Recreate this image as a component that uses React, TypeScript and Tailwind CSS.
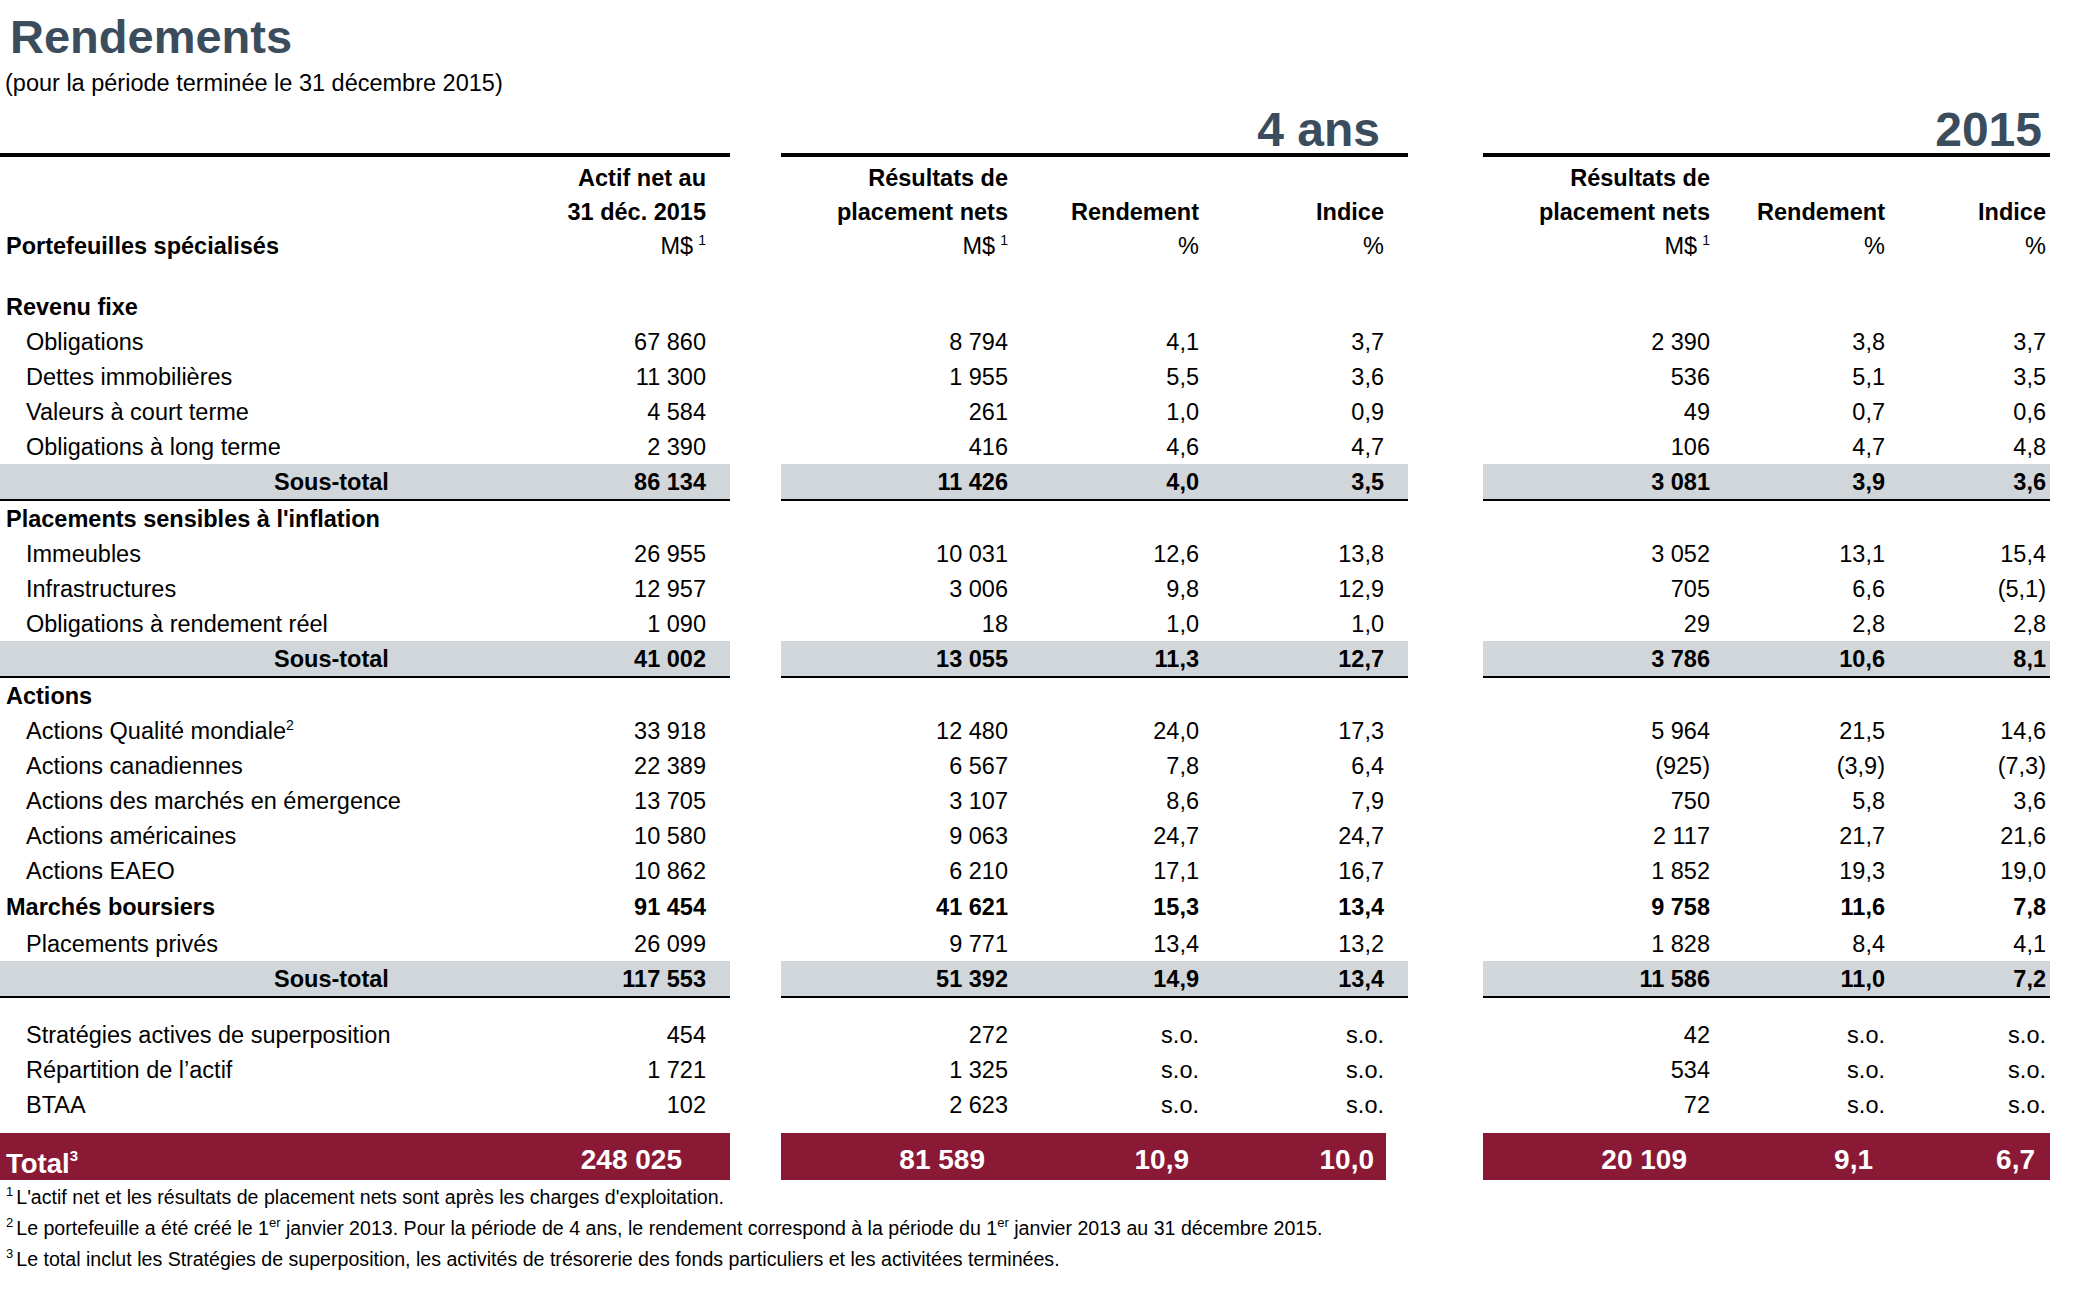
import React from 'react';

type Kind = 'head' | 'item' | 'bold' | 'sub';

interface Row {
  label: string;
  sup?: string;
  kind: Kind;
  v?: string[];
  h?: 35 | 36 | 37;
}

const HEIGHTS: Record<number, string> = {
  35: 'h-[35px]',
  36: 'h-[36px]',
  37: 'h-[37px]',
};

// Bloc principal du tableau
const rowsTop: Row[] = [
  { label: 'Revenu fixe', kind: 'head' },
  { label: 'Obligations', kind: 'item', v: ['67 860', '8 794', '4,1', '3,7', '2 390', '3,8', '3,7'] },
  { label: 'Dettes immobilières', kind: 'item', v: ['11 300', '1 955', '5,5', '3,6', '536', '5,1', '3,5'] },
  { label: 'Valeurs à court terme', kind: 'item', v: ['4 584', '261', '1,0', '0,9', '49', '0,7', '0,6'] },
  { label: 'Obligations à long terme', kind: 'item', v: ['2 390', '416', '4,6', '4,7', '106', '4,7', '4,8'] },
  { label: 'Sous-total', kind: 'sub', v: ['86 134', '11 426', '4,0', '3,5', '3 081', '3,9', '3,6'] },
  { label: "Placements sensibles à l'inflation", kind: 'head' },
  { label: 'Immeubles', kind: 'item', v: ['26 955', '10 031', '12,6', '13,8', '3 052', '13,1', '15,4'] },
  { label: 'Infrastructures', kind: 'item', v: ['12 957', '3 006', '9,8', '12,9', '705', '6,6', '(5,1)'] },
  { label: 'Obligations à rendement réel', kind: 'item', v: ['1 090', '18', '1,0', '1,0', '29', '2,8', '2,8'] },
  { label: 'Sous-total', kind: 'sub', v: ['41 002', '13 055', '11,3', '12,7', '3 786', '10,6', '8,1'] },
  { label: 'Actions', kind: 'head' },
  { label: 'Actions Qualité mondiale', sup: '2', kind: 'item', v: ['33 918', '12 480', '24,0', '17,3', '5 964', '21,5', '14,6'] },
  { label: 'Actions canadiennes', kind: 'item', v: ['22 389', '6 567', '7,8', '6,4', '(925)', '(3,9)', '(7,3)'] },
  { label: 'Actions des marchés en émergence', kind: 'item', v: ['13 705', '3 107', '8,6', '7,9', '750', '5,8', '3,6'] },
  { label: 'Actions américaines', kind: 'item', v: ['10 580', '9 063', '24,7', '24,7', '2 117', '21,7', '21,6'] },
  { label: 'Actions EAEO', kind: 'item', v: ['10 862', '6 210', '17,1', '16,7', '1 852', '19,3', '19,0'] },
  { label: 'Marchés boursiers', kind: 'bold', h: 37, v: ['91 454', '41 621', '15,3', '13,4', '9 758', '11,6', '7,8'] },
  { label: 'Placements privés', kind: 'item', h: 36, v: ['26 099', '9 771', '13,4', '13,2', '1 828', '8,4', '4,1'] },
  { label: 'Sous-total', kind: 'sub', v: ['117 553', '51 392', '14,9', '13,4', '11 586', '11,0', '7,2'] },
];

const rowsOther: Row[] = [
  { label: 'Stratégies actives de superposition', kind: 'item', v: ['454', '272', 's.o.', 's.o.', '42', 's.o.', 's.o.'] },
  { label: 'Répartition de l’actif', kind: 'item', v: ['1 721', '1 325', 's.o.', 's.o.', '534', 's.o.', 's.o.'] },
  { label: 'BTAA', kind: 'item', v: ['102', '2 623', 's.o.', 's.o.', '72', 's.o.', 's.o.'] },
];

const DataRow: React.FC<{ row: Row }> = ({ row }) => {
  const sub = row.kind === 'sub';
  const band = sub ? 'bg-[#d1d6db] border-b-2 border-black' : '';
  const weight = row.kind === 'item' ? 'font-normal' : 'font-bold';
  const pad = row.kind === 'item' ? 'pl-[26px]' : sub ? 'pl-[274px]' : 'pl-[6px]';
  const v = row.v ?? [];
  return (
    <div className={`flex ${HEIGHTS[row.h ?? (sub ? 37 : 35)]} ${weight}`}>
      <div className={`w-[730px] flex items-center pt-[4px] ${band}`}>
        <div className={`flex-1 whitespace-nowrap ${pad}`}>
          {row.label}
          {row.sup && <span className="relative -top-[9px] text-[14px]">{row.sup}</span>}
        </div>
        <div className="w-[160px] pr-[24px] text-right whitespace-nowrap">{v[0]}</div>
      </div>
      <div className="w-[51px]" />
      <div className={`w-[627px] flex items-center pt-[4px] pr-[24px] ${band}`}>
        <div className="w-[227px] text-right whitespace-nowrap">{v[1]}</div>
        <div className="w-[191px] text-right whitespace-nowrap">{v[2]}</div>
        <div className="w-[185px] text-right whitespace-nowrap">{v[3]}</div>
      </div>
      <div className="w-[75px]" />
      <div className={`w-[567px] flex items-center pt-[4px] pr-[4px] ${band}`}>
        <div className="w-[227px] text-right whitespace-nowrap">{v[4]}</div>
        <div className="w-[175px] text-right whitespace-nowrap">{v[5]}</div>
        <div className="w-[161px] text-right whitespace-nowrap">{v[6]}</div>
      </div>
    </div>
  );
};

const MSup = () => (
  <span className="font-normal">
    M$<span className="relative -top-[9px] text-[14px] ml-[5px]">1</span>
  </span>
);

const HeadCol: React.FC<{ w: string; lines: React.ReactNode[] }> = ({ w, lines }) => (
  <div className={`${w} flex flex-col items-end`}>
    {lines.map((l, i) => (
      <div key={i} className="h-[34px] leading-[34px] whitespace-nowrap">
        {l}
      </div>
    ))}
  </div>
);

const App: React.FC = () => {
  return (
    <div className="font-['Liberation_Sans',Arial,sans-serif] w-[2086px] h-[1297px] bg-white text-black text-[23.5px] overflow-hidden">
      {/* Titre */}
      <h1 className="mt-[13px] pl-[10px] text-[47px] leading-none font-bold text-[#3b4c5c]">Rendements</h1>
      <p className="mt-[12px] pl-[5px] text-[23.5px] leading-none">(pour la période terminée le 31 décembre 2015)</p>

      {/* Périodes */}
      <div className="flex mt-[11px] h-[50px]">
        <div className="w-[730px] border-b-4 border-black" />
        <div className="w-[51px]" />
        <div className="w-[627px] border-b-4 border-black flex justify-end pr-[28px] text-[48px] leading-[46px] font-bold text-[#3b4c5c]">
          4 ans
        </div>
        <div className="w-[75px]" />
        <div className="w-[567px] border-b-4 border-black flex justify-end pr-[8px] text-[48px] leading-[46px] font-bold text-[#3b4c5c]">
          2015
        </div>
      </div>

      {/* En-têtes */}
      <div className="flex pt-[4px] pb-[26px] font-bold">
        <div className="w-[730px] flex pr-[24px]">
          <div className="flex-1 flex flex-col">
            <div className="h-[34px]" />
            <div className="h-[34px]" />
            <div className="h-[34px] leading-[34px] pl-[6px]">Portefeuilles spécialisés</div>
          </div>
          <HeadCol w="w-[200px]" lines={['Actif net au', '31 déc. 2015', <MSup key="m" />]} />
        </div>
        <div className="w-[51px]" />
        <div className="w-[627px] flex pr-[24px]">
          <HeadCol w="w-[227px]" lines={['Résultats de', 'placement nets', <MSup key="m" />]} />
          <HeadCol w="w-[191px]" lines={['', 'Rendement', <span key="p" className="font-normal">%</span>]} />
          <HeadCol w="w-[185px]" lines={['', 'Indice', <span key="p" className="font-normal">%</span>]} />
        </div>
        <div className="w-[75px]" />
        <div className="w-[567px] flex pr-[4px]">
          <HeadCol w="w-[227px]" lines={['Résultats de', 'placement nets', <MSup key="m" />]} />
          <HeadCol w="w-[175px]" lines={['', 'Rendement', <span key="p" className="font-normal">%</span>]} />
          <HeadCol w="w-[161px]" lines={['', 'Indice', <span key="p" className="font-normal">%</span>]} />
        </div>
      </div>

      {rowsTop.map((r, i) => (
        <DataRow key={i} row={r} />
      ))}

      <div className="h-[19px]" />
      {rowsOther.map((r, i) => (
        <DataRow key={i} row={r} />
      ))}
      <div className="h-[11px]" />

      {/* Total */}
      <div className="flex h-[47px] font-bold text-white">
        <div className="w-[730px] bg-[#8a1936] flex items-end">
          <div className="flex-1 pl-[6px] pb-[2px] text-[27.5px] leading-none">
            Total<span className="relative -top-[12px] text-[15px]">3</span>
          </div>
          <div className="pr-[48px] pb-[6px] text-[28px] leading-none">248 025</div>
        </div>
        <div className="w-[51px]" />
        <div className="w-[627px] flex">
          <div className="w-[605px] bg-[#8a1936] flex items-end pb-[6px] pr-[12px] text-[28px] leading-none">
            <div className="w-[204px] text-right">81 589</div>
            <div className="w-[204px] text-right">10,9</div>
            <div className="w-[185px] text-right">10,0</div>
          </div>
        </div>
        <div className="w-[75px]" />
        <div className="w-[567px] bg-[#8a1936] flex items-end pb-[6px] pr-[15px] text-[28px] leading-none">
          <div className="w-[204px] text-right">20 109</div>
          <div className="w-[186px] text-right">9,1</div>
          <div className="w-[162px] text-right">6,7</div>
        </div>
      </div>

      {/* Notes */}
      <div className="mt-[3px] pl-[6px] text-[19.6px] leading-[28px]">
        <p>
          <span className="relative -top-[8px] text-[13px] mr-[3px]">1</span>L'actif net et les résultats de placement nets sont après les charges d'exploitation.
        </p>
        <p>
          <span className="relative -top-[8px] text-[13px] mr-[3px]">2</span>Le portefeuille a été créé le 1
          <span className="relative -top-[8px] text-[13px]">er</span> janvier 2013. Pour la période de 4 ans, le rendement correspond à la période du 1
          <span className="relative -top-[8px] text-[13px]">er</span> janvier 2013 au 31 décembre 2015.
        </p>
        <p>
          <span className="relative -top-[8px] text-[13px] mr-[3px]">3</span>Le total inclut les Stratégies de superposition, les activités de trésorerie des fonds particuliers et les activitées terminées.
        </p>
      </div>
    </div>
  );
};

export default App;
